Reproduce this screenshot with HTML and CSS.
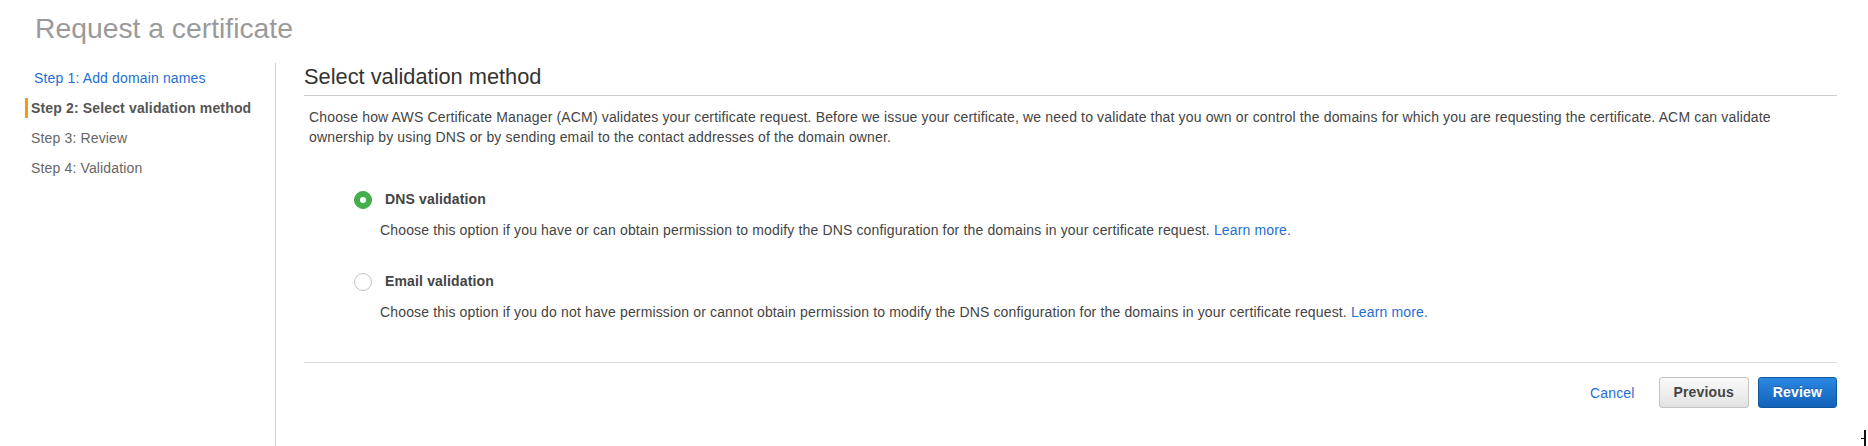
FILE: index.html
```html
<!DOCTYPE html>
<html><head><meta charset="utf-8"><title>Request a certificate</title>
<link rel="stylesheet" href="styles.css">
</head><body>
<h1 class="page-title">Request a certificate</h1>
<div class="wizard">
   <ul class="steps">
      <li class="step done"><a href="#">Step 1: Add domain names</a></li>
      <li class="step active">Step 2: Select validation method</li>
      <li class="step">Step 3: Review</li>
      <li class="step">Step 4: Validation</li>
   </ul>
   <div class="main">
      <h2 class="section-title">Select validation method</h2>
      <p class="intro">Choose how AWS Certificate Manager (ACM) validates your certificate request. Before we issue your certificate, we need to validate that you own or control the domains for which you are requesting the certificate. ACM can validate ownership by using DNS or by sending email to the contact addresses of the domain owner.</p>
      <div class="options">
         <div class="option">
            <div class="option-head"><span class="radio checked"></span><span class="option-label">DNS validation</span></div>
            <div class="option-desc">Choose this option if you have or can obtain permission to modify the DNS configuration for the domains in your certificate request. <a href="#">Learn more.</a></div>
         </div>
         <div class="option">
            <div class="option-head"><span class="radio"></span><span class="option-label">Email validation</span></div>
            <div class="option-desc">Choose this option if you do not have permission or cannot obtain permission to modify the DNS configuration for the domains in your certificate request. <a href="#">Learn more.</a></div>
         </div>
      </div>
      <div class="actions">
         <a href="#" class="cancel">Cancel</a>
         <button class="btn">Previous</button>
         <button class="btn primary">Review</button>
      </div>
   </div>
</div>
<span class="cursor"></span>
</body></html>
```

FILE: styles.css
```css
html, body { height: 100%; }
body
{
	margin         : 0;
	color          : #444;
	background     : #fff;
	font-family    : "Liberation Sans", Arial, sans-serif;
	font-size      : 14px;
	letter-spacing : .15px;
	display        : flex;
	flex-direction : column;
	overflow       : hidden;
}
a { color : #1f6ed4; text-decoration : none; }

.page-title
{
	margin         : 0;
	padding        : 12px 0 19px 35px;
	font-size      : 28.3px;
	line-height    : 32px;
	font-weight    : normal;
	letter-spacing : 0;
	color          : #9a9a9a;
}

.wizard { display : flex; flex : 1; }

.steps
{
	list-style     : none;
	margin         : 0;
	padding        : 5px 0 0 25px;
	width          : 250px;
	border-right   : 1px solid #cfcfcf;
	display        : flex;
	flex-direction : column;
	gap            : 10px;
}
.step
{
	line-height  : 20px;
	padding-left : 3px;
	border-left  : 3px solid transparent;
	color        : #666;
	white-space  : nowrap;
}
.step.done a { padding-left : 3px; }
.step.active { border-left-color : #f7981d; font-weight : bold; color : #555; }

.main { flex : 1; padding : 1px 31px 0 28px; }

.section-title
{
	margin         : 0;
	padding-bottom : 6px;
	border-bottom  : 1px solid #cdcdcd;
	font-size      : 21.8px;
	line-height    : 25px;
	font-weight    : normal;
	letter-spacing : 0;
	color          : #333;
}

.intro { margin : 11px 0 0; padding : 0 20px 0 5px; line-height : 20px; }

.options { padding : 42px 0 0 50px; display : flex; flex-direction : column; gap : 31px; }
.option-head { display : flex; align-items : center; gap : 13px; line-height : 20px; }
.option-label { font-weight : bold; color : #444; }
.option-desc { margin : 11px 0 0 26px; line-height : 20px; }

.radio
{
	box-sizing    : border-box;
	width         : 18px;
	height        : 18px;
	margin-top    : 2px;
	border-radius : 50%;
	border        : 1px solid #c4c4c4;
	background    : #fff;
	display       : flex;
	align-items   : center;
	justify-content : center;
}
.radio.checked { border-color : #3ea84a; background : #44b04c; }
.radio.checked::after
{
	content       : "";
	width         : 6px;
	height        : 6px;
	border-radius : 50%;
	background    : #fff;
}

.actions
{
	margin-top      : 40px;
	padding-top     : 14px;
	border-top      : 1px solid #dcdcdc;
	display         : flex;
	justify-content : flex-end;
	align-items     : center;
	gap             : 9px;
}
.cancel { margin-right : 15px; }
.btn
{
	font-family    : inherit;
	font-size      : 14px;
	font-weight    : bold;
	letter-spacing : .15px;
	line-height    : 29px;
	padding        : 0 14px;
	border-radius  : 3px;
	border         : 1px solid #c3c3c3;
	color          : #444;
	background     : linear-gradient(#fafafa, #e2e2e2);
}
.btn.primary
{
	color        : #fff;
	border-color : #12589f;
	background   : linear-gradient(#2b88e2, #1261b9);
	text-shadow  : 0 -1px 0 rgba(0,0,0,.25);
}

.cursor
{
	position   : absolute;
	left       : 1864px;
	top        : 430px;
	width      : 2px;
	height     : 16px;
	background : #111;
}
.cursor::before
{
	content    : "";
	position   : absolute;
	left       : -3px;
	top        : 8px;
	width      : 3px;
	height     : 1px;
	background : #111;
}
```
